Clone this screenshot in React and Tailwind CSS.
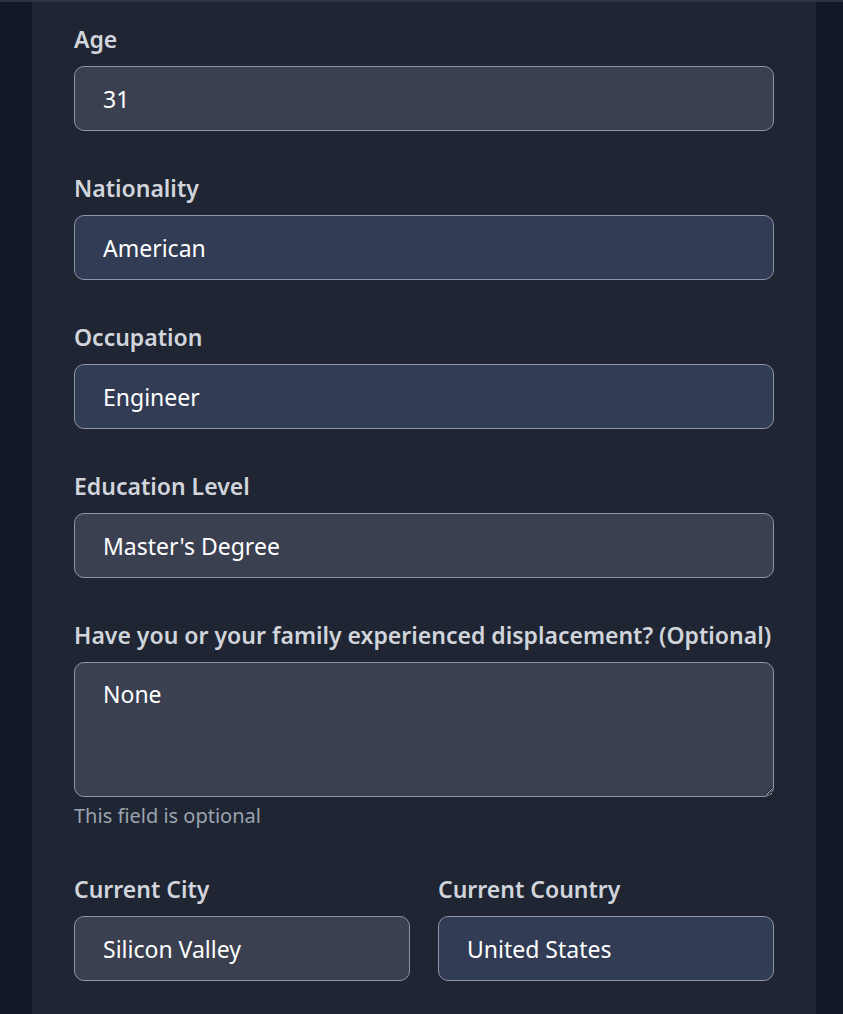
import React from 'react'

const labelCls = 'block text-[23px] leading-[28px] font-semibold text-[#d1d5db] mb-[13px]'
const inputBase =
  'w-full h-[65px] rounded-[10px] border border-[#8d95a5] px-[28px] text-[23px] text-white outline-none'

function Field({ label, value, blue, className = '' }) {
  return (
    <div className={className}>
      <label className={labelCls}>{label}</label>
      <input
        type="text"
        defaultValue={value}
        className={`${inputBase} ${blue ? 'bg-[#323c54]' : 'bg-[#3a4050]'}`}
      />
    </div>
  )
}

export default function App() {
  return (
    <div
      className="min-h-screen bg-[#111827] flex flex-col"
      style={{ fontFamily: '"Noto Sans", "Open Sans", sans-serif' }}
    >
      <div className="h-[2px] bg-[#2b3242]" />
      <div className="ml-[32px] w-[784px] flex-1 bg-[#1f2533] px-[42px] pt-[23px] pb-[40px]">
        <Field label="Age" value="31" />
        <Field label="Nationality" value="American" blue className="mt-[43px]" />
        <Field label="Occupation" value="Engineer" blue className="mt-[43px]" />
        <Field label="Education Level" value="Master's Degree" className="mt-[43px]" />
        <div className="mt-[43px]">
          <label className={labelCls}>
            Have you or your family experienced displacement? (Optional)
          </label>
          <textarea
            defaultValue="None"
            className="block w-full h-[135px] rounded-[10px] border border-[#8d95a5] bg-[#3a4050] px-[28px] py-[15px] text-[23px] leading-[32px] text-white outline-none"
          />
          <p className="mt-[6px] text-[20px] leading-[26px] text-[#9ca3af]">This field is optional</p>
        </div>
        <div className="mt-[46px] grid grid-cols-2 gap-[28px]">
          <Field label="Current City" value="Silicon Valley" />
          <Field label="Current Country" value="United States" blue />
        </div>
      </div>
    </div>
  )
}
